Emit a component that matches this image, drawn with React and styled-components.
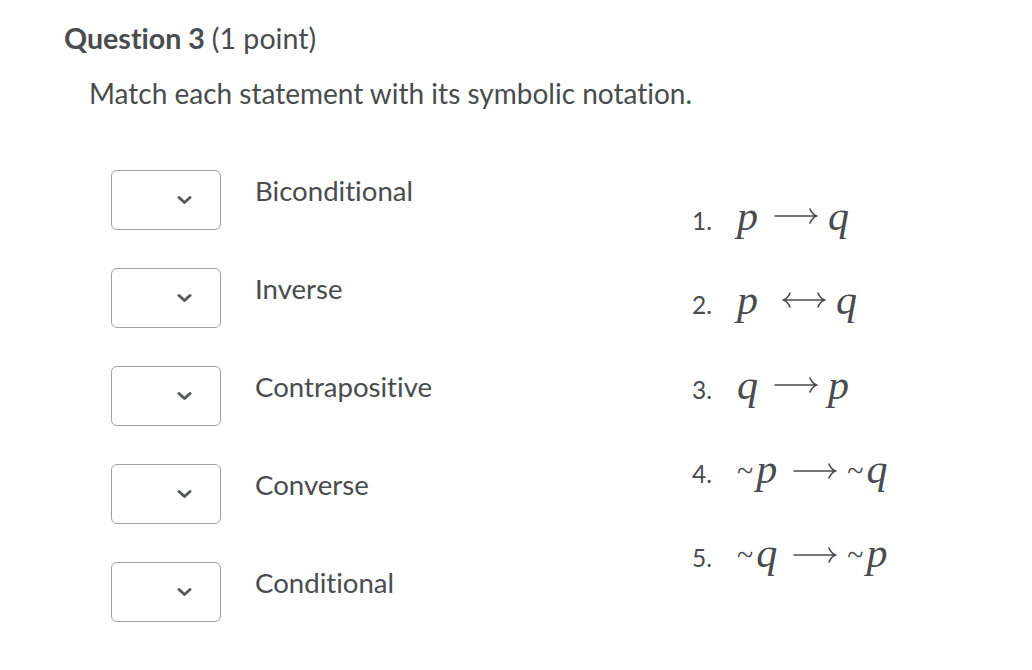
import React from "react";
import styled, { createGlobalStyle } from "styled-components";

const Global = createGlobalStyle`
  html, body { margin: 0; padding: 0; background: #ffffff; }
  body {
    font-family: Lato, "Noto Sans", sans-serif;
    color: #494c4e;
    font-variant-ligatures: none;
  }
`;

const Page = styled.div`
  width: 1032px;
  height: 670px;
  box-sizing: border-box;
  padding: 20px 0 0 64px;
  overflow: hidden;
`;

const Title = styled.h2`
  margin: 0;
  font-size: 28.6px;
  line-height: 36px;
  font-weight: 700;
  color: #494c4e;
  span { font-weight: 400; }
`;

const Prompt = styled.p`
  margin: 21px 0 0 25px;
  font-size: 28px;
  line-height: 32px;
  color: #494c4e;
`;

const Match = styled.div`
  display: grid;
  grid-template-columns: 581px 1fr;
  margin-top: 61px;
  padding-left: 47px;
`;

const Statements = styled.div`
  display: flex;
  flex-direction: column;
  gap: 38px;
`;

const Row = styled.div`
  display: flex;
  align-items: flex-start;
  gap: 34px;
`;

const Select = styled.div`
  width: 110px;
  height: 60px;
  box-sizing: border-box;
  border: 1px solid #9ea0a2;
  border-radius: 6px;
  background: #fff;
  display: flex;
  align-items: center;
  justify-content: flex-end;
  padding-right: 28px;
`;

const Label = styled.div`
  font-size: 27.6px;
  line-height: 32px;
  padding-top: 5px;
  color: #494c4e;
`;

const Options = styled.ol`
  list-style: none;
  margin: 26px 0 0;
  padding: 0;
  display: flex;
  flex-direction: column;
  gap: 44.3px;
`;

const Option = styled.li`
  display: flex;
  align-items: baseline;
  height: 40px;
  line-height: 40px;
`;

const Num = styled.span`
  font-size: 24.5px;
  width: 45px;
  color: #494c4e;
`;

const Formula = styled.span`
  display: inline-flex;
  align-items: baseline;
  color: #494c4e;
`;

const V = styled.i`
  font-family: "Liberation Serif", "DejaVu Serif", serif;
  font-style: italic;
  font-size: 42px;
`;

const ArrowBox = styled.span`
  display: inline-block;
  width: ${(p) => p.$w}px;
  margin: 0 ${(p) => p.$gapR}px 0 ${(p) => p.$gapL}px;
  align-self: center;
  line-height: 0;
`;

const Tilde = styled.span`
  font-family: "Liberation Serif", "DejaVu Serif", serif;
  font-size: 30px;
  margin-right: 3px;
  position: relative;
  top: -2px;
`;

const Chevron = () => (
  <svg width="15" height="10" viewBox="0 0 15 10">
    <path d="M2 2.5 L7.5 7.5 L13 2.5" fill="none" stroke="#565a5c" strokeWidth="3" strokeLinecap="round" strokeLinejoin="round" />
  </svg>
);

const Arrow = ({ both }) => (
  <ArrowBox $w={44} $gapL={both ? 24 : 16} $gapR={10}>
    <svg width="44" height="20" viewBox="0 0 44 20">
      <path
        d={
          both
            ? "M2 10 H42 M36 3 Q38 8 42.5 10 Q38 12 36 17 M8 3 Q6 8 1.5 10 Q6 12 8 17"
            : "M1 10 H42 M36 3 Q38 8 42.5 10 Q38 12 36 17"
        }
        fill="none"
        stroke="#494c4e"
        strokeWidth="1.6"
        strokeLinecap="round"
      />
    </svg>
  </ArrowBox>
);

const statements = ["Biconditional", "Inverse", "Contrapositive", "Converse", "Conditional"];

const Term = ({ neg, v }) => (
  <>
    {neg && <Tilde>~</Tilde>}
    <V>{v}</V>
  </>
);

const options = [
  { a: "p", b: "q" },
  { a: "p", b: "q", both: true },
  { a: "q", b: "p" },
  { a: "p", b: "q", neg: true },
  { a: "q", b: "p", neg: true },
];

export default function App() {
  return (
    <Page>
      <Global />
      <Title>Question 3 <span>(1 point)</span></Title>
      <Prompt>Match each statement with its symbolic notation.</Prompt>
      <Match>
        <Statements>
          {statements.map((s) => (
            <Row key={s}>
              <Select><Chevron /></Select>
              <Label>{s}</Label>
            </Row>
          ))}
        </Statements>
        <Options>
          {options.map((o, i) => (
            <Option key={i}>
              <Num>{i + 1}.</Num>
              <Formula>
                <Term neg={o.neg} v={o.a} />
                <Arrow both={o.both} />
                <Term neg={o.neg} v={o.b} />
              </Formula>
            </Option>
          ))}
        </Options>
      </Match>
    </Page>
  );
}
